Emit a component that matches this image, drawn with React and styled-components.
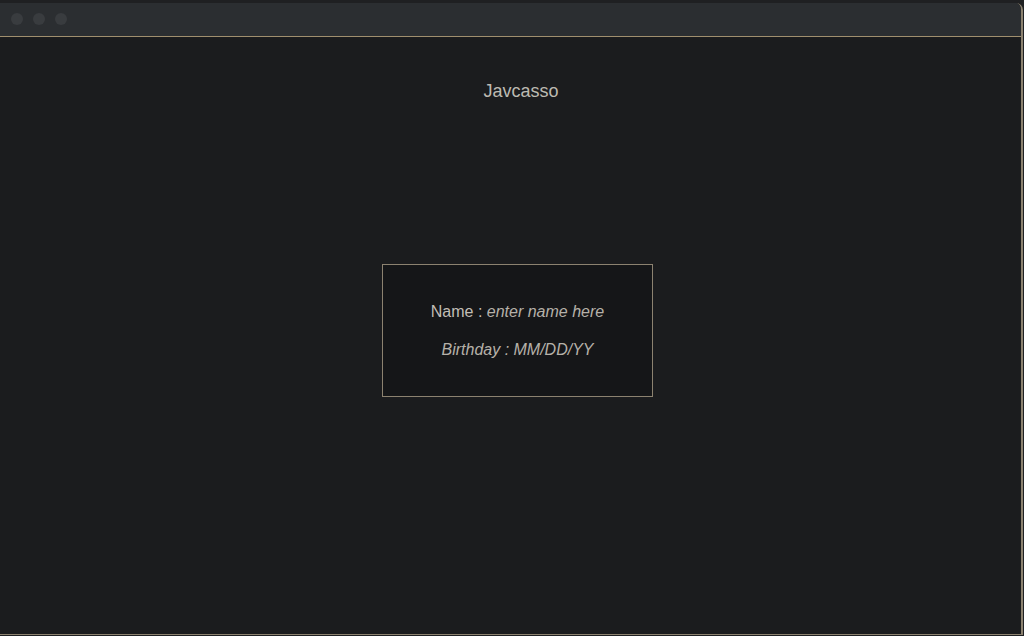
import styled, { createGlobalStyle } from "styled-components";

const Global = createGlobalStyle`
  html, body {
    margin: 0;
    padding: 0;
    background: #1f2022;
    overflow: hidden;
  }
  * {
    box-sizing: border-box;
  }
`;

function App() {
  return (
    <>
      <Global />
      <Janela>
        <BarraTitulo>
          <Bolinha />
          <Bolinha />
          <Bolinha />
        </BarraTitulo>
        <Conteudo>
          <Titulo>Javcasso</Titulo>
          <Caixa>
            <Linha>
              Name : <Italico>enter name here</Italico>
            </Linha>
            <Linha>
              <Italico>Birthday : MM/DD/YY</Italico>
            </Linha>
          </Caixa>
        </Conteudo>
      </Janela>
    </>
  );
}

export default App;

const Janela = styled.div`
  margin-top: 3px;
  width: 1023px;
  height: 632px;
  display: flex;
  flex-direction: column;
  border-right: 2px solid #8c8270;
  border-bottom: 1px solid #8c8270;
  border-top-right-radius: 7px;
  background: #1b1c1e;
  overflow: hidden;
`;

const BarraTitulo = styled.div`
  height: 34px;
  flex-shrink: 0;
  background: #2b2e31;
  border-bottom: 1px solid #a08f6e;
  display: flex;
  align-items: center;
  gap: 10px;
  padding: 0 0 1px 11px;
`;

const Bolinha = styled.div`
  width: 12px;
  height: 12px;
  border-radius: 50%;
  background: #393c3f;
`;

const Conteudo = styled.div`
  flex: 1;
  display: flex;
  flex-direction: column;
  align-items: center;
  font-family: "Liberation Sans", Arial, sans-serif;
  color: #bcb8b0;
`;

const Titulo = styled.h1`
  margin: 43px 0 0 21px;
  font-size: 18px;
  font-weight: 400;
  line-height: 22px;
  color: #bdbab2;
`;

const Caixa = styled.div`
  margin-top: 162px;
  margin-left: 14px;
  width: 271px;
  height: 133px;
  border: 1px solid #8c8270;
  background: #151618;
  display: flex;
  flex-direction: column;
  align-items: center;
  justify-content: center;
  gap: 19px;
`;

const Linha = styled.div`
  font-size: 16px;
  line-height: 19px;
  color: #c2beb6;
`;

const Italico = styled.span`
  font-style: italic;
  color: #b5b1a9;
`;
